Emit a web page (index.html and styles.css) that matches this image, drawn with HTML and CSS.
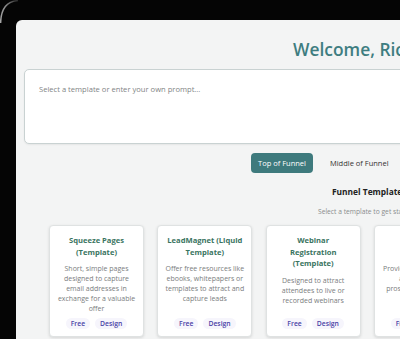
FILE: index.html
```html
<!DOCTYPE html>
<html lang="en">
<head>
<meta charset="utf-8">
<title>Funnel Builder</title>
<link rel="stylesheet" href="styles.css">
</head>
<body>
<div class="device">
  <svg class="bezel-edge" width="40" height="40" viewBox="0 0 40 40" aria-hidden="true">
    <defs>
      <linearGradient id="edge" x1="0" y1="1" x2="1" y2="0">
        <stop offset="0" stop-color="#a8a8a8"/>
        <stop offset="0.55" stop-color="#8a8a8a"/>
        <stop offset="1" stop-color="#2a2a2a"/>
      </linearGradient>
    </defs>
    <path d="M0.6 23 Q1.2 1.5 18 0.6" fill="none" stroke="url(#edge)" stroke-width="1.5"/>
  </svg>
  <div class="screen">
    <header class="top">
      <h1 class="welcome">Welcome, Richard!</h1>
    </header>
    <main class="main">
      <textarea class="prompt" placeholder="Select a template or enter your own prompt..."></textarea>
      <nav class="tabs">
        <button class="tab tab-active">Top of Funnel</button>
        <button class="tab">Middle of Funnel</button>
        <button class="tab">Bottom of Funnel</button>
      </nav>
      <section class="templates">
        <h2 class="templates-title">Funnel Templates</h2>
        <p class="templates-sub">Select a template to get started</p>
        <div class="grid">
          <article class="card">
            <h3 class="card-title">Squeeze Pages<br>(Template)</h3>
            <p class="card-desc">Short, simple pages<br>designed to capture<br>email addresses in<br>exchange for a valuable<br>offer</p>
            <div class="tags"><span class="tag">Free</span><span class="tag">Design</span></div>
          </article>
          <article class="card">
            <h3 class="card-title">LeadMagnet (Liquid<br>Template)</h3>
            <p class="card-desc">Offer free resources like<br>ebooks, whitepapers or<br>templates to attract and<br>capture leads</p>
            <div class="tags"><span class="tag">Free</span><span class="tag">Design</span></div>
          </article>
          <article class="card">
            <h3 class="card-title">Webinar<br>Registration<br>(Template)</h3>
            <p class="card-desc">Designed to attract<br>attendees to live or<br>recorded webinars</p>
            <div class="tags"><span class="tag">Free</span><span class="tag">Design</span></div>
          </article>
          <article class="card">
            <h3 class="card-title">Tripwire<br>(Template)</h3>
            <p class="card-desc">Provide a low-cost offer<br>after opt-in to<br>prospects into buyers</p>
            <div class="tags"><span class="tag">Free</span><span class="tag">Design</span></div>
          </article>
          <article class="card">
            <h3 class="card-title">Quiz Funnel<br>(Template)</h3>
            <p class="card-desc">Engage visitors with<br>interactive quizzes</p>
            <div class="tags"><span class="tag">Free</span><span class="tag">Design</span></div>
          </article>
          <article class="card">
            <h3 class="card-title">Free Trial<br>(Template)</h3>
            <p class="card-desc">Let prospects try your<br>product at no cost</p>
            <div class="tags"><span class="tag">Free</span><span class="tag">Design</span></div>
          </article>
        </div>
      </section>
    </main>
  </div>
</div>
</body>
</html>
```
FILE: styles.css
```css
* { box-sizing: border-box; }

html, body {
  margin: 0;
  padding: 0;
}

body {
  background: #050505;
  overflow: hidden;
  width: 400px;
  height: 339px;
  font-family: "Open Sans", "Noto Sans", sans-serif;
}

.device {
  position: relative;
  padding: 20px 0 0 16px;
}

.bezel-edge {
  position: absolute;
  left: 0;
  top: 0;
}

.screen {
  width: 712px;
  min-height: 420px;
  background: #f3f4f4;
  border-top-left-radius: 6px;
}

.top {
  height: 49px;
  padding: 16px 0 0 277px;
}

.welcome {
  margin: 0;
  font-size: 17.4px;
  line-height: 26px;
  font-weight: 600;
  color: #3e7d80;
  white-space: nowrap;
}

.main {
  padding: 0 8px;
}

.prompt {
  display: block;
  width: 100%;
  height: 75px;
  margin: 0;
  padding: 14px 14px;
  border: 1px solid #c9d2d2;
  border-radius: 5px;
  background: #fff;
  box-shadow: 0 1px 2px rgba(0, 0, 0, 0.06);
  resize: none;
  font-family: "Open Sans", "Noto Sans", sans-serif;
  font-size: 7.6px;
  line-height: 11px;
  color: #333;
}

.prompt::placeholder {
  color: #7f8485;
}

.tabs {
  display: flex;
  gap: 10px;
  margin-top: 9px;
  padding-left: 227px;
}

.tab {
  height: 20px;
  padding: 0 7px;
  border: none;
  border-radius: 4px;
  background: transparent;
  font-family: "Open Sans", "Noto Sans", sans-serif;
  font-size: 7.5px;
  color: #333;
  white-space: nowrap;
}

.tab-active {
  background: #3e7a7d;
  color: #fff;
}

.templates-title {
  margin: 13px 0 0;
  padding-left: 308px;
  font-size: 8.4px;
  line-height: 12px;
  font-weight: 700;
  color: #222;
  white-space: nowrap;
}

.templates-sub {
  margin: 9px 0 0;
  padding-left: 294px;
  font-size: 6.7px;
  line-height: 10px;
  color: #8a8d8e;
  white-space: nowrap;
}

.grid {
  display: grid;
  grid-template-columns: repeat(6, 95px);
  column-gap: 13.33px;
  margin-top: 8px;
  padding-left: 25px;
}

.card {
  display: flex;
  flex-direction: column;
  align-items: center;
  height: 112px;
  padding: 9px 4px 7px;
  background: #fff;
  border: 1px solid #dfe2e2;
  border-radius: 4px;
  box-shadow: 0 1px 3px rgba(0, 0, 0, 0.12);
  text-align: center;
}

.card-title {
  margin: 0 0 5.5px;
  font-size: 7.6px;
  line-height: 11.7px;
  font-weight: 700;
  color: #3a745f;
  white-space: nowrap;
}

.card-desc {
  margin: 0;
  font-size: 7px;
  line-height: 10px;
  color: #7a7d7e;
  white-space: nowrap;
}

.tags {
  display: flex;
  gap: 5px;
  margin-top: auto;
}

.tag {
  padding: 0 5px;
  height: 11px;
  line-height: 11px;
  border-radius: 6px;
  background: #f6f5fc;
  color: #4a43a6;
  font-size: 6.8px;
  font-weight: 600;
}
```
